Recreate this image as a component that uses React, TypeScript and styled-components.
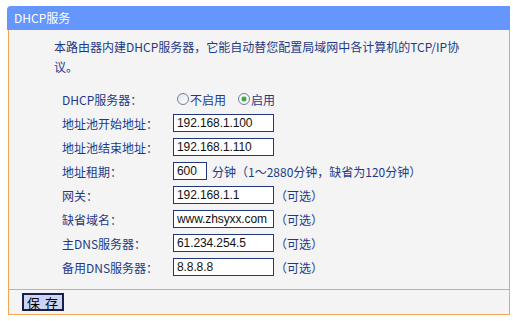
import React from "react";
import styled, { createGlobalStyle } from "styled-components";

const orange = "#f4a454";
const navy = "#1d3a88";

const GlobalStyle = createGlobalStyle`
  body {
    margin: 0;
    background: #ffffff;
    font-family: "Noto Sans CJK SC", "Liberation Sans", sans-serif;
    font-size: 12px;
  }
`;

const rows: { label: string; value: string; width?: number; note: string }[] = [
  { label: "地址池开始地址：", value: "192.168.1.100", note: "" },
  { label: "地址池结束地址：", value: "192.168.1.110", note: "" },
  { label: "地址租期：", value: "600", width: 34, note: "分钟（1～2880分钟，缺省为120分钟）" },
  { label: "网关：", value: "192.168.1.1", note: "（可选）" },
  { label: "缺省域名：", value: "www.zhsyxx.com", note: "（可选）" },
  { label: "主DNS服务器：", value: "61.234.254.5", note: "（可选）" },
  { label: "备用DNS服务器：", value: "8.8.8.8", note: "（可选）" },
];

export default () => {
  return (
    <>
      <GlobalStyle />
      <Panel>
        <Header>DHCP服务</Header>
        <Body>
          <Intro>本路由器内建DHCP服务器，它能自动替您配置局域网中各计算机的TCP/IP协议。</Intro>
          <Form>
            <Label>DHCP服务器：</Label>
            <Radios>
              <Radio />
              <RadioText>不启用</RadioText>
              <Radio $checked />
              <RadioText>启用</RadioText>
            </Radios>
            {rows.map((r) => (
              <React.Fragment key={r.label}>
                <Label>{r.label}</Label>
                <Field>
                  <Input $width={r.width ?? 101} defaultValue={r.value} />
                  {r.note && <Note $gap={r.width ? 5 : 1}>{r.note}</Note>}
                </Field>
              </React.Fragment>
            ))}
          </Form>
        </Body>
        <Footer>
          <SaveButton>保 存</SaveButton>
        </Footer>
      </Panel>
    </>
  );
};

const Panel = styled.div`
  margin: 6px 0 0 7px;
  width: 503px;
`;

const Header = styled.div`
  height: 24px;
  line-height: 24px;
  padding-left: 7px;
  background: #6496fc;
  color: #ffffff;
  border-radius: 4px 0 0 0;
  font-size: 12px;
`;

const Body = styled.div`
  margin-left: 1px;
  background: #f4f4f4;
  border-left: 1px solid ${orange};
  border-right: 1px solid ${orange};
  border-bottom: 1px solid ${orange};
  padding: 7px 0 10px 45px;
`;

const Intro = styled.p`
  margin: 0;
  width: 410px;
  line-height: 20px;
  color: ${navy};
`;

const Form = styled.div`
  margin: 10px 0 0 8px;
  display: grid;
  grid-template-columns: 111px auto;
  grid-auto-rows: 24px;
  align-items: center;
`;

const Label = styled.div`
  color: ${navy};
  white-space: nowrap;
`;

const Radios = styled.div`
  display: flex;
  align-items: center;
  padding-left: 4px;
`;

const Radio = styled.span<{ $checked?: boolean }>`
  width: 10px;
  height: 10px;
  border-radius: 50%;
  border: 1px solid #6d7f9c;
  background: ${(p) =>
    p.$checked
      ? "radial-gradient(circle, #3fa83f 0 2px, #a8dca8 2.5px, #f4f8fb 3.5px)"
      : "linear-gradient(135deg, #dfe4ea, #ffffff)"};
`;

const RadioText = styled.span`
  color: ${navy};
  margin: 0 12px 0 1px;
`;

const Field = styled.div`
  display: flex;
  align-items: center;
`;

const Input = styled.input<{ $width: number }>`
  box-sizing: border-box;
  width: ${(p) => p.$width}px;
  height: 18px;
  padding: 0 3px;
  border: 1px solid #24367a;
  background: #ffffff;
  font-family: "Liberation Sans", sans-serif;
  font-size: 12px;
  letter-spacing: -0.1px;
  color: #111111;
  outline: none;
`;

const Note = styled.span<{ $gap: number }>`
  margin-left: ${(p) => p.$gap}px;
  color: ${navy};
  white-space: nowrap;
`;

const Footer = styled.div`
  margin-left: 1px;
  height: 25px;
  box-sizing: border-box;
  background: #f4f4f4;
  border-left: 1px solid ${orange};
  border-right: 1px solid ${orange};
  border-bottom: 1px solid ${orange};
  padding: 3px 0 0 13px;
`;

const SaveButton = styled.button`
  width: 42px;
  height: 18px;
  padding: 0;
  border: 2px solid #1a1f4a;
  background: #ccd4f4;
  color: #000000;
  font-family: "Noto Sans CJK SC", sans-serif;
  font-size: 13px;
  line-height: 13px;
  letter-spacing: 1px;
  white-space: pre;
`;
